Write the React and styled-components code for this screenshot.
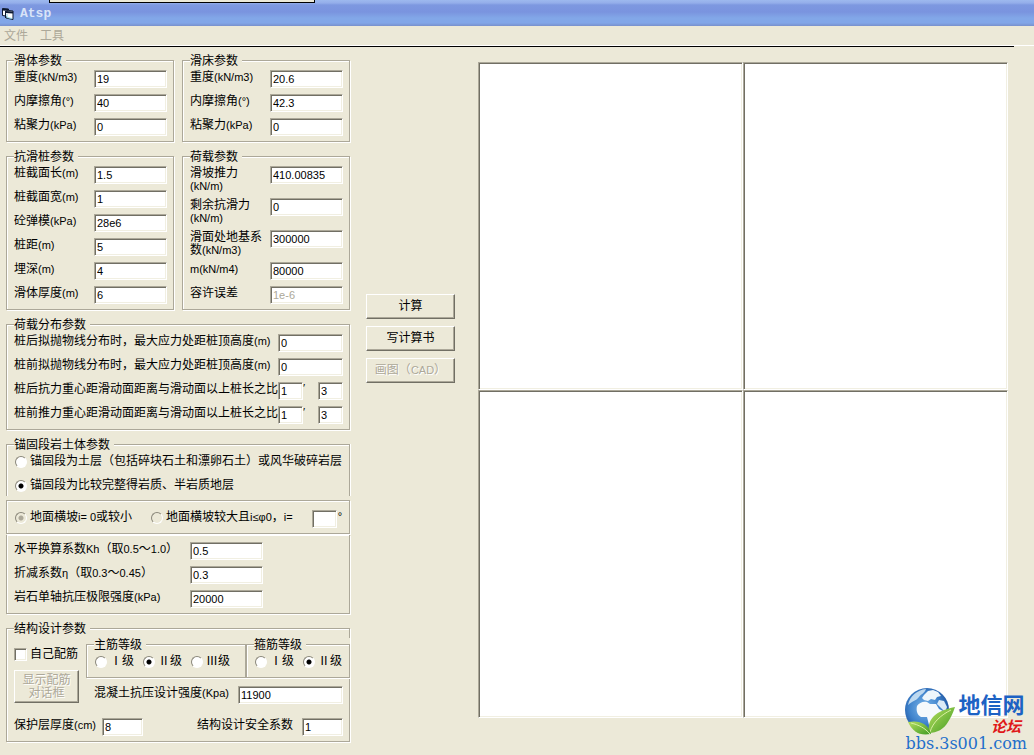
import { useId, useState } from "react";
import styled, { createGlobalStyle, css } from "styled-components";

const GlobalStyle = createGlobalStyle`
* {
    box-sizing: border-box;
}

body {
    margin: 0;
    background: #ece9d8;
    color: #000;
    font-family: "Liberation Sans", "Noto Sans CJK SC", sans-serif;
    font-size: 12px;
    line-height: 13px;
}
`;

const etched = css`
border: 1px solid #aca899;
box-shadow: 1px 1px 0 #fff, inset 1px 1px 0 #fff;
`;

const sunken = css`
border: 1px solid;
border-color: #aca899 #fff #fff #aca899;
box-shadow: inset 1px 1px 0 #716f64, inset -1px -1px 0 #f1efe2;
`;

const TitleBar = styled.header`
position: relative;
display: flex;
align-items: center;
gap: 6px;
height: 26px;
padding: 1px 2px 0;
background: linear-gradient(#9db9ee 0, #94aeea 3px, #7d98e0 5px, #7a94df 12px, #82a7e8 18px, #82a6e8 23px, #7890cc 26px);
`;

const TitleText = styled.h1`
margin: 0;
color: #d8e4f8;
font-family: "Liberation Mono", monospace;
font-size: 13px;
font-weight: bold;
`;

const HintEdge = styled.div`
position: absolute;
top: 0;
left: 49px;
width: 266px;
height: 3px;
background: #ece9d8;
border: 1px solid #000;
border-top: none;
`;

const MenuBar = styled.nav`
display: flex;
gap: 12px;
padding: 4px 4px 2px;
border-bottom: 1px solid #fff;
`;

const MenuItem = styled.button`
padding: 0;
border: none;
background: none;
color: #aca899;
font: inherit;
`;

const Divider = styled.div`
height: 1px;
margin-right: 20px;
background: #000;
`;

const Main = styled.main`
display: flex;
padding: 7px 26px 13px 6px;
`;

const Parameters = styled.form`
flex: none;
display: grid;
grid-template-columns: 168px 168px;
gap: 8px;
`;

const Group = styled.fieldset`
${etched}
min-width: 0;
margin: 0;
padding: 3px 6px 5px 7px;
grid-column: ${({ $wide }) => ($wide ? "1 / -1" : "auto")};
`;

const Legend = styled.legend`
height: 13px;
margin: 0;
padding: 0 4px 0 0;
background: #ece9d8;
line-height: 15px;
`;

const Rows = styled.div`
display: flex;
flex-direction: column;
gap: 6px;
`;

const Row = styled.div`
display: flex;
align-items: flex-start;
justify-content: space-between;
min-height: 18px;
`;

const FieldBox = styled.div`
display: flex;
align-items: flex-start;
justify-content: ${({ $packed }) => ($packed ? "flex-start" : "space-between")};
min-height: 18px;
`;

const Label = styled.label`
flex: none;
width: ${({ $width }) => $width || "auto"};
margin: 1px 0 -1px;
`;

const Latin = styled.span`
font-size: 11px;
`;

const TextInput = styled.input`
${sunken}
flex: none;
width: ${({ $width }) => $width || "73px"};
height: 18px;
padding: 0 2px;
border-radius: 0;
background: #fff;
color: #000;
font-family: inherit;
font-size: 11px;
outline: none;

&:disabled {
    color: #aca899;
}
`;

const Ratio = styled.div`
display: grid;
grid-template-columns: 25px 1fr 25px;
width: 65px;
`;

const Choice = styled.label`
display: flex;
align-items: center;
gap: 3px;
height: 13px;
white-space: nowrap;
`;

const Radio = styled.input`
appearance: none;
flex: none;
width: 12px;
height: 12px;
margin: 0;
border: 1px solid;
border-color: #8a877a #fff #fff #8a877a;
border-radius: 50%;
background: #fff;

&:checked {
    background: radial-gradient(circle, #000 2px, #fff 3px);
}

&:disabled {
    background: #ece9d8;
}

&:disabled:checked {
    background: radial-gradient(circle, #aca899 2px, #ece9d8 3px);
}
`;

const CheckBox = styled.input`
${sunken}
appearance: none;
flex: none;
width: 13px;
height: 13px;
margin: 0;
background: #fff;

&:checked {
    background: radial-gradient(circle, #000 3px, #fff 4px);
}
`;

const AnchorSection = styled.section`
grid-column: 1 / -1;
`;

const AnchorGroup = styled(Group)`
height: 58px;
padding: 4px 6px 0 8px;
border-bottom: none;
box-shadow: inset 1px 1px 0 #fff, 1px 0 0 #fff;
`;

const SlopeBox = styled.div`
${etched}
display: flex;
align-items: flex-start;
height: 34px;
margin-top: 4px;
padding: 9px 10px 0 8px;
`;

const SlopeChoice = styled(Choice)`
margin: 1px 19px 0 0;
`;

const SlopeAngle = styled.label`
display: flex;
gap: 1px;
margin-left: auto;
`;

const RockBox = styled.div`
${etched}
margin-top: 1px;
padding: 7px 6px 5px 7px;
border-top: none;
`;

const DesignBody = styled.div`
display: grid;
grid-template-columns: 65px 1fr;
column-gap: 7px;
margin-bottom: 14px;
`;

const RebarColumn = styled.div`
display: flex;
flex-direction: column;
gap: 9px;
padding-top: 10px;
`;

const GradeStrip = styled.div`
display: grid;
grid-template-columns: 160px 104px;
margin: 0 -7px 8px 0;
background: #ece9d8;
`;

const GradeGroup = styled(Group)`
padding: 4px 0 9px 8px;
`;

const GradeLegend = styled(Legend)`
margin-left: -1px;
`;

const GradeChoices = styled.div`
display: flex;
gap: 9px;
`;

const Concrete = styled.div`
padding-left: 8px;
`;

const Actions = styled.div`
flex: none;
display: flex;
flex-direction: column;
gap: 7px;
width: 89px;
margin: 240px 23px 0 16px;
`;

const Button = styled.button`
min-height: ${({ $tall }) => ($tall ? "33px" : "25px")};
padding: 0;
border: 1px solid;
border-color: #fff #716f64 #716f64 #fff;
border-radius: 0;
box-shadow: inset -1px -1px 0 #aca899;
background: #ece9d8;
color: #000;
font: inherit;

&:disabled {
    color: #aca899;
    text-shadow: 1px 1px 0 #fff;
}
`;

const Plots = styled.section`
flex: 1;
display: grid;
grid-template: 1fr 1fr / 1fr 1fr;
margin: 8px 0 24px;
`;

const Plot = styled.div`
${sunken}
background: #fff;
`;

const SiteMark = styled.aside`
position: absolute;
top: 686px;
right: 7px;
display: grid;
grid-template-columns: 50px auto;
column-gap: 3px;
`;

const SiteName = styled.div`
padding-top: 4px;
color: #1c62c4;
font-family: "Noto Sans CJK SC", sans-serif;
font-size: 22px;
font-weight: bold;
line-height: 26px;
`;

const ForumName = styled.div`
padding-right: 6px;
color: #e01818;
font-family: "Noto Sans CJK SC", sans-serif;
font-size: 15px;
font-style: italic;
font-weight: bold;
line-height: 20px;
text-align: right;
`;

const SiteLink = styled.a`
grid-column: 1 / -1;
color: #1f6fcb;
font-family: "DejaVu Serif", serif;
font-size: 16px;
line-height: 16px;
text-decoration: none;
`;

const soilFields = [
    ["重度(kN/m3)", "19"],
    ["内摩擦角(°)", "40"],
    ["粘聚力(kPa)", "0"],
];

const bedFields = [
    ["重度(kN/m3)", "20.6"],
    ["内摩擦角(°)", "42.3"],
    ["粘聚力(kPa)", "0"],
];

const pileFields = [
    ["桩截面长(m)", "1.5"],
    ["桩截面宽(m)", "1"],
    ["砼弹模(kPa)", "28e6"],
    ["桩距(m)", "5"],
    ["埋深(m)", "4"],
    ["滑体厚度(m)", "6"],
];

const loadFields = [
    ["滑坡推力(kN/m)", "410.00835"],
    ["剩余抗滑力(kN/m)", "0"],
    ["滑面处地基系数(kN/m3)", "300000"],
    ["m(kN/m4)", "80000"],
    ["容许误差", "1e-6", true],
];

const rockFields = [
    ["水平换算系数Kh（取0.5～1.0）", "0.5"],
    ["折减系数η（取0.3～0.45）", "0.3"],
    ["岩石单轴抗压极限强度(kPa)", "20000"],
];

// latin runs are set one pixel smaller than the chinese text
const Mixed = ({ text }) =>
    text.split(/([\x20-\x7e°ηφ≤]+)/).map((part, index) => (index % 2 ? <Latin key={index}>{part}</Latin> : part));

const Field = ({ label, value, width, labelWidth, packed, disabled }) => {
    const id = useId();
    return (
        <FieldBox $packed={packed}>
            <Label htmlFor={id} $width={labelWidth}><Mixed text={label} /></Label>
            <TextInput id={id} type="text" defaultValue={value} $width={width} disabled={disabled} />
        </FieldBox>
    );
};

const FieldGroup = ({ title, fields, labelWidth }) => (
    <Group>
        <Legend>{title}</Legend>
        <Rows>
            {fields.map(([label, value, disabled]) => (
                <Field key={label} label={label} value={value} disabled={disabled} labelWidth={labelWidth} />
            ))}
        </Rows>
    </Group>
);

const RatioField = ({ label }) => {
    const id = useId();
    return (
        <FieldBox>
            <Label htmlFor={id}>{label}</Label>
            <Ratio>
                <TextInput id={id} type="text" defaultValue="1" $width="25px" />
                <Latin>′</Latin>
                <TextInput type="text" defaultValue="3" $width="25px" aria-label={label} />
            </Ratio>
        </FieldBox>
    );
};

const Grades = ({ title, name, options, initial }) => {
    const [grade, setGrade] = useState(initial);
    return (
        <GradeGroup>
            <GradeLegend>{title}</GradeLegend>
            <GradeChoices>
                {options.map(option => (
                    <Choice key={option}>
                        <Radio type="radio" name={name} checked={grade === option} onChange={() => setGrade(option)} />
                        {option}
                    </Choice>
                ))}
            </GradeChoices>
        </GradeGroup>
    );
};

const WindowIcon = () => (
    <svg width="12" height="13" viewBox="0 0 12 13">
        <path d="M0.5 1.5l6 0.5v1.5l4.5 0.5v8.5l-7-1.5v-2l-3.5-0.5z" fill="#fff" stroke="#0c1830" />
        <path d="M0.5 2.5l6 0.5M4 5l7 0.5" stroke="#0c1830" strokeWidth="2" />
        <path d="M3.5 4v7" stroke="#0c1830" />
        <path d="M5 7v3.5l5 1" fill="none" stroke="#8fd3e6" />
    </svg>
);

const Globe = () => (
    <svg width="50" height="50" viewBox="0 0 50 50">
        <defs>
            <radialGradient id="sea" cx="0.45" cy="0.45" r="0.6">
                <stop offset="0" stopColor="#7db7ea" />
                <stop offset="0.6" stopColor="#3f83cc" />
                <stop offset="1" stopColor="#1a4c98" />
            </radialGradient>
            <linearGradient id="leaf" x1="0" y1="0" x2="1" y2="1">
                <stop offset="0" stopColor="#b9e060" />
                <stop offset="1" stopColor="#3f9a22" />
            </linearGradient>
        </defs>
        <circle cx="22" cy="24" r="22" fill="url(#sea)" />
        <path d="M3 19C5 10 12 4 21 3c-1 4-5 5-7 8-3 4-7 4-11 8z" fill="#dcedf9" opacity="0.8" />
        <path d="M19 9l4-4 5-1 5 2 3 4-4 1-2 3-4-1-3 2-4-1-2-2z" fill="#eef6fb" />
        <path d="M12 20c2-3 6-5 10-4l3 2 6 0 3 5 4 2-4 4-2 6-4 5-4-1-2-8-6 0c-4-2-5-7-4-11z" fill="#f5f9fc" />
        <path d="M34 14l5 1 3 6-2 5-4-4-4-4z" fill="#dcebf7" />
        <path d="M24 47c-2-14 6-22 26-26-2 6-4 10-7 15-4 7-11 11-19 11z" fill="url(#leaf)" />
        <path d="M25 46c3-10 11-17 21-22" fill="none" stroke="#daf0a4" strokeWidth="1" />
        <path d="M26 48C14 50 8 46 3 36c11-2 20 1 23 12z" fill="url(#leaf)" />
        <path d="M6 37c8 2 14 5 19 11" fill="none" stroke="#daf0a4" strokeWidth="1" />
    </svg>
);

const App = () => {
    const [stratum, setStratum] = useState("rock");

    return (
        <>
            <GlobalStyle />
            <TitleBar>
                <WindowIcon />
                <TitleText>Atsp</TitleText>
                <HintEdge />
            </TitleBar>
            <MenuBar>
                <MenuItem disabled>文件</MenuItem>
                <MenuItem disabled>工具</MenuItem>
            </MenuBar>
            <Divider />

            <Main>
                <Parameters onSubmit={(e) => e.preventDefault()}>
                    <FieldGroup title="滑体参数" fields={soilFields} />
                    <FieldGroup title="滑床参数" fields={bedFields} />
                    <FieldGroup title="抗滑桩参数" fields={pileFields} />
                    <FieldGroup title="荷载参数" fields={loadFields} labelWidth="76px" />

                    <Group $wide>
                        <Legend>荷载分布参数</Legend>
                        <Rows>
                            <Field label="桩后拟抛物线分布时，最大应力处距桩顶高度(m)" value="0" width="65px" />
                            <Field label="桩前拟抛物线分布时，最大应力处距桩顶高度(m)" value="0" width="65px" />
                            <RatioField label="桩后抗力重心距滑动面距离与滑动面以上桩长之比" />
                            <RatioField label="桩前推力重心距滑动面距离与滑动面以上桩长之比" />
                        </Rows>
                    </Group>

                    <AnchorSection>
                        <AnchorGroup>
                            <GradeLegend>锚固段岩土体参数</GradeLegend>
                            <Rows>
                                <Row>
                                    <Choice>
                                        <Radio type="radio" name="stratum" checked={stratum === "soil"} onChange={() => setStratum("soil")} />
                                        锚固段为土层（包括碎块石土和漂卵石土）或风华破碎岩层
                                    </Choice>
                                </Row>
                                <Row>
                                    <Choice>
                                        <Radio type="radio" name="stratum" checked={stratum === "rock"} onChange={() => setStratum("rock")} />
                                        锚固段为比较完整得岩质、半岩质地层
                                    </Choice>
                                </Row>
                            </Rows>
                        </AnchorGroup>
                        <SlopeBox>
                            <SlopeChoice>
                                <Radio type="radio" name="slope" defaultChecked disabled />
                                <span><Mixed text="地面横坡i= 0或较小" /></span>
                            </SlopeChoice>
                            <SlopeChoice>
                                <Radio type="radio" name="slope" disabled />
                                <span><Mixed text="地面横坡较大且i≤φ0，i=" /></span>
                            </SlopeChoice>
                            <SlopeAngle>
                                <TextInput type="text" $width="25px" aria-label="i" />
                                <Latin>°</Latin>
                            </SlopeAngle>
                        </SlopeBox>
                        <RockBox>
                            <Rows>
                                {rockFields.map(([label, value]) => (
                                    <Field key={label} label={label} value={value} labelWidth="176px" packed />
                                ))}
                            </Rows>
                        </RockBox>
                    </AnchorSection>

                    <Group $wide>
                        <Legend>结构设计参数</Legend>
                        <DesignBody>
                            <RebarColumn>
                                <Choice>
                                    <CheckBox type="checkbox" />
                                    自己配筋
                                </Choice>
                                <Button type="button" $tall disabled>显示配筋<br />对话框</Button>
                            </RebarColumn>
                            <div>
                                <GradeStrip>
                                    <Grades title="主筋等级" name="main" options={["Ⅰ级", "Ⅱ级", "Ⅲ级"]} initial="Ⅱ级" />
                                    <Grades title="箍筋等级" name="stirrup" options={["Ⅰ级", "Ⅱ级"]} initial="Ⅱ级" />
                                </GradeStrip>
                                <Concrete>
                                    <Field label="混凝土抗压设计强度(Kpa)" value="11900" width="105px" />
                                </Concrete>
                            </div>
                        </DesignBody>
                        <Row>
                            <Field label="保护层厚度(cm)" value="8" width="41px" labelWidth="88px" />
                            <Field label="结构设计安全系数" value="1" width="41px" labelWidth="105px" />
                        </Row>
                    </Group>
                </Parameters>

                <Actions>
                    <Button type="button">计算</Button>
                    <Button type="button">写计算书</Button>
                    <Button type="button" disabled>画图（<Latin>CAD</Latin>）</Button>
                </Actions>

                <Plots>
                    <Plot />
                    <Plot />
                    <Plot />
                    <Plot />
                </Plots>
            </Main>

            <SiteMark>
                <Globe />
                <div>
                    <SiteName>地信网</SiteName>
                    <ForumName>论坛</ForumName>
                </div>
                <SiteLink href="#">bbs.3s001.com</SiteLink>
            </SiteMark>
        </>
    );
};

export default App;
